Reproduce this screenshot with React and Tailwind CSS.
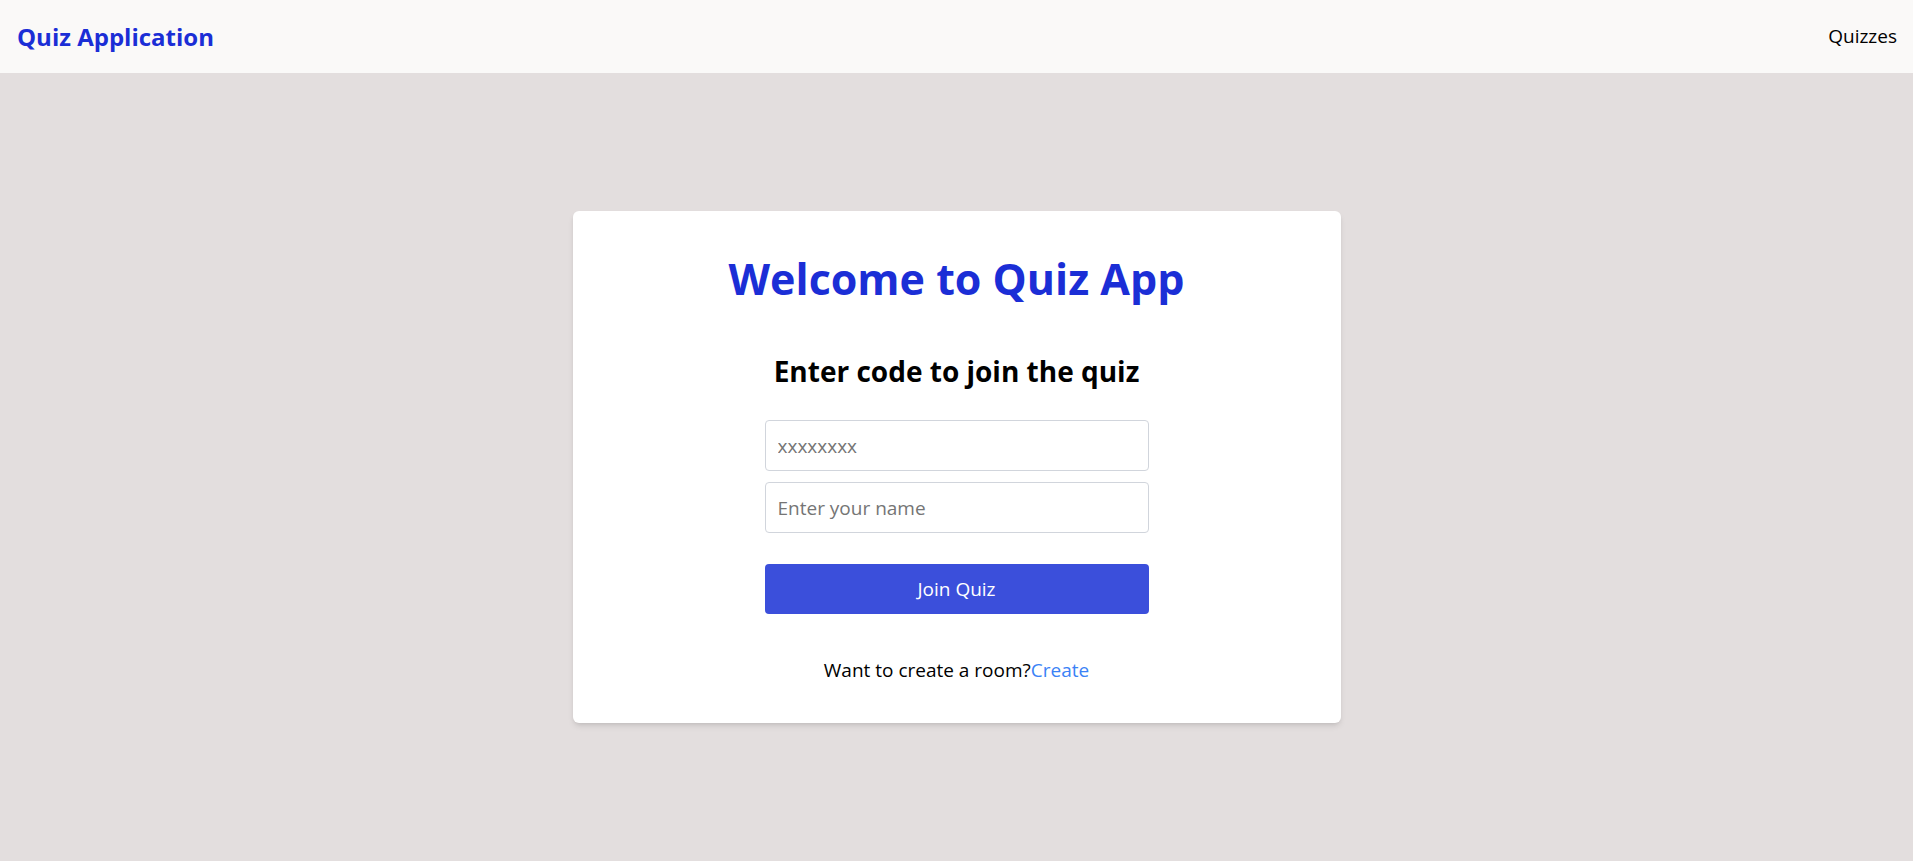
export default function App() {
  return (
    <div className="min-h-screen flex flex-col bg-[#e3dede]" style={{ fontFamily: '"Open Sans", "Noto Sans", sans-serif' }}>
      <header className="h-[73px] shrink-0 bg-[#faf9f8] flex items-center justify-between pl-[17px] pr-[16px]">
        <span className="text-[24px] font-bold text-[#1b2ed6]">Quiz Application</span>
        <span className="text-[19px] text-black">Quizzes</span>
      </header>
      <main className="flex-1 flex items-center justify-center">
        <div className="w-[768px] h-[512px] bg-white rounded-md shadow-md flex flex-col items-center pt-[40px]">
          <h1 className="text-[43px] leading-[56px] font-bold text-[#1b2ed6]">Welcome to Quiz App</h1>
          <h2 className="mt-[46px] text-[28px] leading-[36px] font-bold text-black">Enter code to join the quiz</h2>
          <div className="mt-[31px] w-96 flex flex-col gap-[11px]">
            <input className="h-[51px] w-full border border-gray-300 rounded px-3 text-[19px] placeholder:text-[#757575] outline-none" placeholder="xxxxxxxx" />
            <input className="h-[51px] w-full border border-gray-300 rounded px-3 text-[19px] placeholder:text-[#757575] outline-none" placeholder="Enter your name" />
          </div>
          <button className="mt-[31px] w-96 h-[50px] rounded bg-[#3b4fdb] text-white text-[19px]">Join Quiz</button>
          <p className="mt-[42px] text-[19px] text-black">Want to create a room?<a className="text-[#3b82f6]" href="#">Create</a></p>
        </div>
      </main>
    </div>
  );
}
